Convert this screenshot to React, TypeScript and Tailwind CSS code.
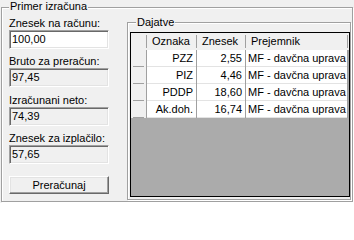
import type { ReactNode } from "react"

interface Dajatev {
  code: string
  amount: string
  recipient: string
}

const dajatve: Dajatev[] = [
  { code: "PZZ", amount: "2,55", recipient: "MF - davčna uprava" },
  { code: "PIZ", amount: "4,46", recipient: "MF - davčna uprava" },
  { code: "PDDP", amount: "18,60", recipient: "MF - davčna uprava" },
  { code: "Ak.doh.", amount: "16,74", recipient: "MF - davčna uprava" },
]

const fields = [
  { label: "Znesek na računu:", value: "100,00", readOnly: false, gap: "mt-[4px]" },
  { label: "Bruto za preračun:", value: "97,45", readOnly: true, gap: "mt-[6px]" },
  { label: "Izračunani neto:", value: "74,39", readOnly: true, gap: "mt-[7px]" },
  { label: "Znesek za izplačilo:", value: "57,65", readOnly: true, gap: "mt-[6px]" },
]

function Field({ label, value, readOnly, gap }: (typeof fields)[number]) {
  return (
    <div className={gap}>
      <div className="h-[13px] leading-[13px] whitespace-nowrap">{label}</div>
      <div
        className={`flex h-[19px] w-[100px] items-center border border-t-[#a0a0a0] border-l-[#a0a0a0] border-r-white border-b-white pl-[2px] leading-[13px] shadow-[inset_1px_1px_0_#696969,inset_-1px_-1px_0_#e3e3e3] ${
          readOnly ? "bg-[#f0f0f0]" : "bg-white"
        }`}
      >
        {value}
      </div>
    </div>
  )
}

function HeaderSep() {
  return <div className="my-[2px] w-[1px] shrink-0 bg-[#a0a0a0]" />
}

function VLine() {
  return <div className="w-[1px] shrink-0 bg-[#a0a0a0]" />
}

function Grid() {
  return (
    <div className="mt-[3px] ml-[2px] flex h-[165px] w-[220px] flex-col overflow-hidden border border-black bg-[#ababab]">
      {/* Column headers */}
      <div className="flex h-[17px] shrink-0 bg-[#f0f0f0] leading-[13px]">
        <div className="w-[15px] shrink-0" />
        <HeaderSep />
        <div className="flex w-[49px] shrink-0 items-center pl-[5px]">Oznaka</div>
        <HeaderSep />
        <div className="flex w-[48px] shrink-0 items-center pl-[5px]">Znesek</div>
        <HeaderSep />
        <div className="flex w-[101px] shrink-0 items-center pl-[5px]">Prejemnik</div>
        <HeaderSep />
      </div>

      {/* Rows */}
      {dajatve.map((d) => (
        <div key={d.code} className="flex h-[17px] shrink-0 leading-[13px]">
          <div className="flex w-[15px] shrink-0 items-end bg-[#f0f0f0] px-[2px]">
            <div className="h-[1px] w-full bg-[#a0a0a0]" />
          </div>
          <VLine />
          <div className="flex w-[49px] shrink-0 items-center justify-end border-b border-[#e3e3e3] bg-white pr-[3px]">
            {d.code}
          </div>
          <VLine />
          <div className="flex w-[48px] shrink-0 items-center justify-end border-b border-[#e3e3e3] bg-white pr-[3px]">
            {d.amount}
          </div>
          <VLine />
          <div className="flex w-[101px] shrink-0 items-center border-b border-[#e3e3e3] bg-white pl-[2px] whitespace-nowrap">
            {d.recipient}
          </div>
          <VLine />
        </div>
      ))}
    </div>
  )
}

function Legend({ className, children }: { className: string; children: ReactNode }) {
  return (
    <div className={`flex ${className}`}>
      <span className="bg-[#f0f0f0] px-[1px] leading-[13px] whitespace-nowrap">{children}</span>
    </div>
  )
}

export default function App() {
  return (
    <div className="h-[203px] w-[354px] overflow-hidden bg-[#f0f0f0] pt-[7px] pl-[1px] font-['Liberation_Sans',Arial,sans-serif] text-[11px] text-black">
      {/* Primer izračuna */}
      <div className="h-[195px] w-[352px] border border-[#a0a0a0] shadow-[inset_1px_1px_0_#fff,1px_1px_0_#fff]">
        <Legend className="-mt-[8px] ml-[7px]">Primer izračuna</Legend>

        <div className="flex">
          {/* Input column */}
          <div className="w-[125px] shrink-0 pl-[7px]">
            {fields.map((f) => (
              <Field key={f.label} {...f} />
            ))}
            <button
              type="button"
              className="mt-[12px] flex h-[18px] w-[100px] items-center justify-center border border-t-white border-l-white border-r-[#696969] border-b-[#696969] bg-[#f0f0f0] leading-[13px] shadow-[inset_-1px_-1px_0_#a0a0a0,inset_1px_1px_0_#e3e3e3]"
            >
              Preračunaj
            </button>
          </div>

          {/* Dajatve */}
          <div className="mt-[9px] h-[178px] w-[224px] shrink-0 border border-[#a0a0a0] shadow-[inset_1px_1px_0_#fff,1px_1px_0_#fff]">
            <Legend className="-mt-[7px] ml-[8px]">Dajatve</Legend>
            <Grid />
          </div>
        </div>
      </div>
    </div>
  )
}
